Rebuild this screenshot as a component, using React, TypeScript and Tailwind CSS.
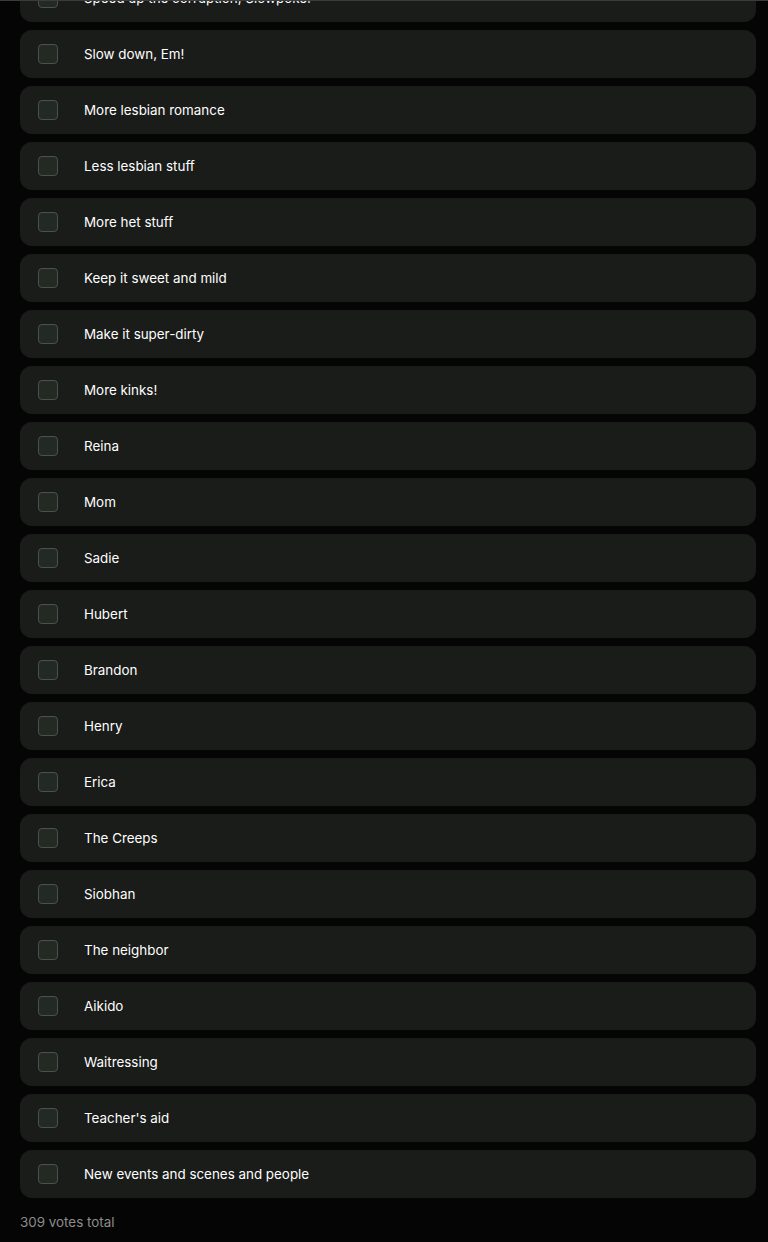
import React from "react";

const options = [
  "Speed up the corruption, Slowpoke!",
  "Slow down, Em!",
  "More lesbian romance",
  "Less lesbian stuff",
  "More het stuff",
  "Keep it sweet and mild",
  "Make it super-dirty",
  "More kinks!",
  "Reina",
  "Mom",
  "Sadie",
  "Hubert",
  "Brandon",
  "Henry",
  "Erica",
  "The Creeps",
  "Siobhan",
  "The neighbor",
  "Aikido",
  "Waitressing",
  "Teacher's aid",
  "New events and scenes and people",
];

const App: React.FC = () => {
  return (
    <div
      className="h-[1242px] overflow-hidden bg-[#050505] relative"
      style={{ fontFamily: "Inter, 'Noto Sans', sans-serif" }}
    >
      {/* thin top edge */}
      <div className="absolute top-0 left-0 right-0 h-px bg-[#3a3a3f] z-10" />
      <div className="pl-5 pr-3 mt-[-26px] flex flex-col gap-2">
        {options.map((opt) => (
          <label
            key={opt}
            className="h-12 rounded-xl bg-[#1a1c1a] flex items-center pl-[18px] gap-[26px] cursor-pointer"
          >
            <span className="w-5 h-5 rounded-[4px] border border-[#4a524a] bg-[#232a23] shrink-0" />
            <span className="text-[13.4px] font-normal text-white leading-5">{opt}</span>
          </label>
        ))}
      </div>
      <p className="px-5 mt-[14px] text-[13.4px] leading-5 text-[#8c8c8c]">309 votes total</p>
    </div>
  );
};

export default App;
